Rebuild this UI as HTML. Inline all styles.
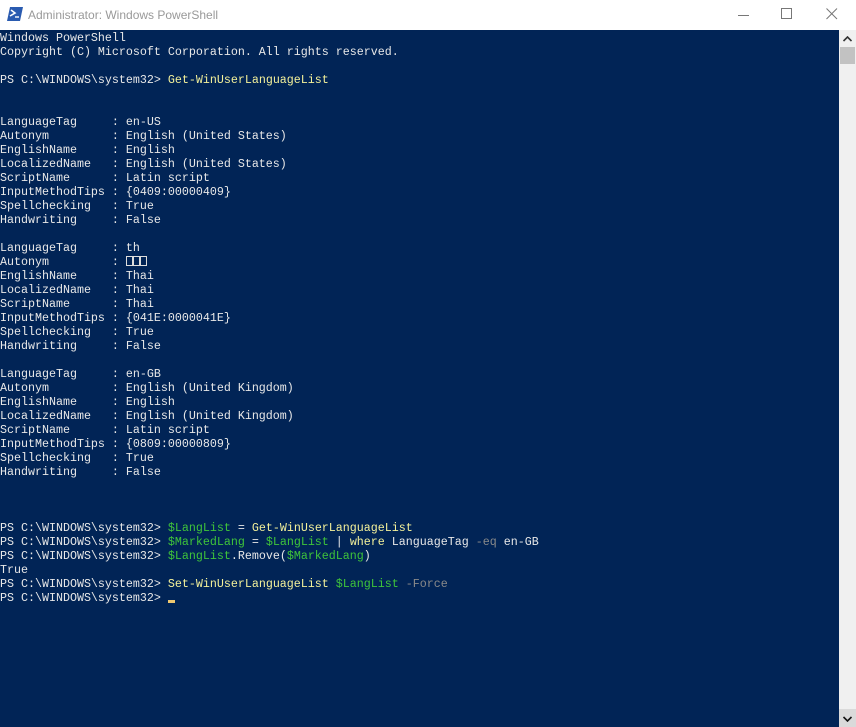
<!DOCTYPE html>
<html><head><meta charset="utf-8"><style>
html,body{margin:0;padding:0;width:856px;height:727px;overflow:hidden;background:#fff}
#title{position:absolute;left:0;top:0;width:856px;height:30px;background:#fff;font-family:"Liberation Sans",sans-serif;font-size:12px;color:#999}
#title .t{position:absolute;left:28px;top:8px}
#con{position:absolute;left:0;top:30px;width:839px;height:697px;background:#012456}
#sb{position:absolute;left:839px;top:30px;width:17px;height:697px;background:#f0f0f0}
pre{margin:0;position:absolute;left:0;top:1px;font-family:"Liberation Mono",monospace;font-size:11.67px;line-height:14px;color:#e8e8e8;white-space:pre}
.y{color:#f4f19a}.g{color:#3fc43a}.d{color:#8a8a8a}
.bx{display:inline-block;width:5px;height:8px;border:1px solid #ddd;margin-right:0px;vertical-align:-1px}
.cur{display:inline-block;width:7px;height:3px;background:#eec870;vertical-align:-2px}
</style></head><body>
<div id="title">
<svg style="position:absolute;left:7px;top:7px" width="16" height="14" viewBox="0 0 16 14"><path d="M3 0H16L13 14H0Z" fill="#2a5bb0"/><path d="M4 3l4 3-5 3" stroke="#fff" stroke-width="1.6" fill="none"/><path d="M8 10h4" stroke="#fff" stroke-width="1.4"/></svg>
<span class="t">Administrator: Windows PowerShell</span>
<svg style="position:absolute;left:738px;top:9px" width="12" height="12"><path d="M0 6.5H11" stroke="#777" stroke-width="1"/></svg>
<svg style="position:absolute;left:781px;top:8px" width="12" height="12"><rect x="0.5" y="0.5" width="10" height="10" fill="none" stroke="#777"/></svg>
<svg style="position:absolute;left:826px;top:8px" width="12" height="12"><path d="M0.5 0.5L11 11M11 0.5L0.5 11" stroke="#777"/></svg>
</div>
<div id="con"><pre>Windows PowerShell
Copyright (C) Microsoft Corporation. All rights reserved.

PS C:\WINDOWS\system32&gt; <span class="y">Get-WinUserLanguageList</span>


LanguageTag     : en-US
Autonym         : English (United States)
EnglishName     : English
LocalizedName   : English (United States)
ScriptName      : Latin script
InputMethodTips : {0409:00000409}
Spellchecking   : True
Handwriting     : False

LanguageTag     : th
Autonym         : <span class="bx"></span><span class="bx"></span><span class="bx"></span>
EnglishName     : Thai
LocalizedName   : Thai
ScriptName      : Thai
InputMethodTips : {041E:0000041E}
Spellchecking   : True
Handwriting     : False

LanguageTag     : en-GB
Autonym         : English (United Kingdom)
EnglishName     : English
LocalizedName   : English (United Kingdom)
ScriptName      : Latin script
InputMethodTips : {0809:00000809}
Spellchecking   : True
Handwriting     : False



PS C:\WINDOWS\system32&gt; <span class="g">$LangList</span> = <span class="y">Get-WinUserLanguageList</span>
PS C:\WINDOWS\system32&gt; <span class="g">$MarkedLang</span> = <span class="g">$LangList</span> | <span class="y">where</span> LanguageTag <span class="d">-eq</span> en-GB
PS C:\WINDOWS\system32&gt; <span class="g">$LangList</span>.Remove(<span class="g">$MarkedLang</span>)
True
PS C:\WINDOWS\system32&gt; <span class="y">Set-WinUserLanguageList</span> <span class="g">$LangList</span> <span class="d">-Force</span>
PS C:\WINDOWS\system32&gt; <span class="cur"></span></pre></div>
<div id="sb">
<svg style="position:absolute;left:4px;top:6px" width="9" height="6"><path d="M0.5 5L4.5 1L8.5 5" stroke="#333" stroke-width="1.6" fill="none"/></svg>
<div style="position:absolute;left:1px;top:17px;width:15px;height:17px;background:#c2c2c2"></div>
<div style="position:absolute;left:0;top:679px;width:17px;height:18px;background:#dadada"></div>
<svg style="position:absolute;left:4px;top:686px" width="9" height="6"><path d="M0.5 1L4.5 5L8.5 1" stroke="#111" stroke-width="1.6" fill="none"/></svg>
</div>
</body></html>
